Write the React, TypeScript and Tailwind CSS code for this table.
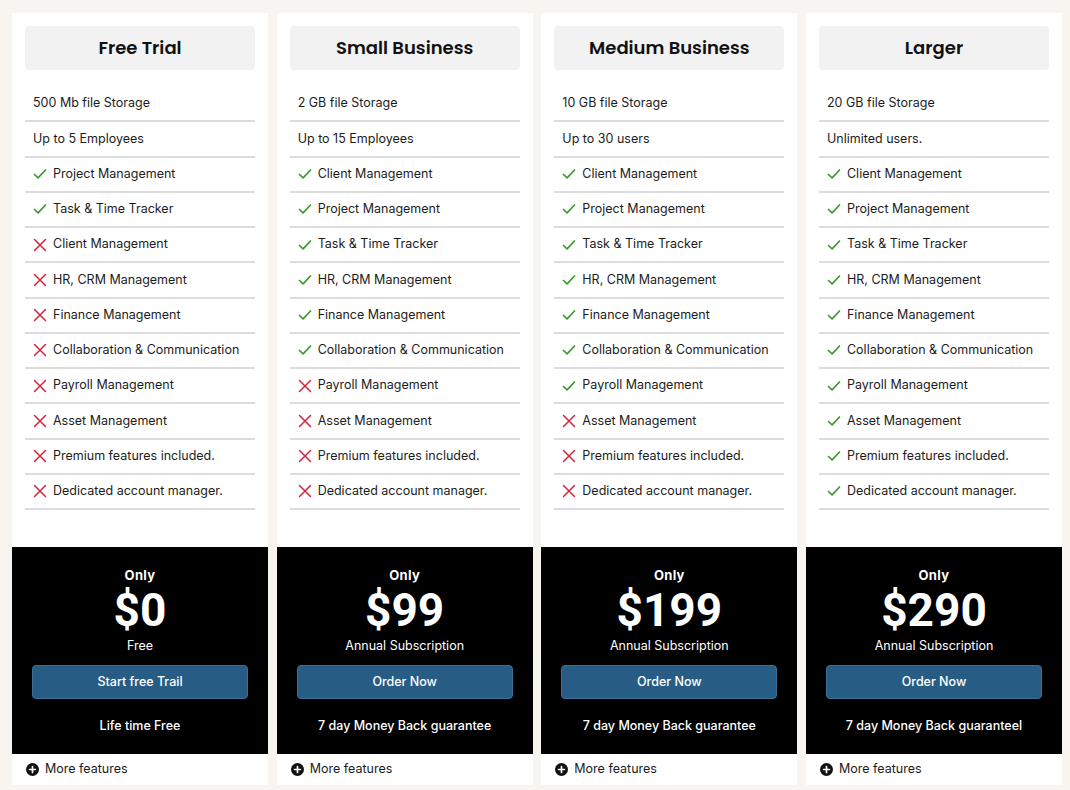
import type { ReactNode } from 'react'

type Feature = { label: string; state?: 'yes' | 'no' }

interface Plan {
  name: string
  features: Feature[]
  price: string
  period: string
  cta: string
  note: string
}

const y = (label: string): Feature => ({ label, state: 'yes' })
const n = (label: string): Feature => ({ label, state: 'no' })

const plans: Plan[] = [
  {
    name: 'Free Trial',
    features: [
      { label: '500 Mb file Storage' },
      { label: 'Up to 5 Employees' },
      y('Project Management'),
      y('Task & Time Tracker'),
      n('Client Management'),
      n('HR, CRM Management'),
      n('Finance Management'),
      n('Collaboration & Communication'),
      n('Payroll Management'),
      n('Asset Management'),
      n('Premium features included.'),
      n('Dedicated account manager.'),
    ],
    price: '$0',
    period: 'Free',
    cta: 'Start free Trail',
    note: 'Life time Free',
  },
  {
    name: 'Small Business',
    features: [
      { label: '2 GB file Storage' },
      { label: 'Up to 15 Employees' },
      y('Client Management'),
      y('Project Management'),
      y('Task & Time Tracker'),
      y('HR, CRM Management'),
      y('Finance Management'),
      y('Collaboration & Communication'),
      n('Payroll Management'),
      n('Asset Management'),
      n('Premium features included.'),
      n('Dedicated account manager.'),
    ],
    price: '$99',
    period: 'Annual Subscription',
    cta: 'Order Now',
    note: '7 day Money Back guarantee',
  },
  {
    name: 'Medium Business',
    features: [
      { label: '10 GB file Storage' },
      { label: 'Up to 30 users' },
      y('Client Management'),
      y('Project Management'),
      y('Task & Time Tracker'),
      y('HR, CRM Management'),
      y('Finance Management'),
      y('Collaboration & Communication'),
      y('Payroll Management'),
      n('Asset Management'),
      n('Premium features included.'),
      n('Dedicated account manager.'),
    ],
    price: '$199',
    period: 'Annual Subscription',
    cta: 'Order Now',
    note: '7 day Money Back guarantee',
  },
  {
    name: 'Larger',
    features: [
      { label: '20 GB file Storage' },
      { label: 'Unlimited users.' },
      y('Client Management'),
      y('Project Management'),
      y('Task & Time Tracker'),
      y('HR, CRM Management'),
      y('Finance Management'),
      y('Collaboration & Communication'),
      y('Payroll Management'),
      y('Asset Management'),
      y('Premium features included.'),
      y('Dedicated account manager.'),
    ],
    price: '$290',
    period: 'Annual Subscription',
    cta: 'Order Now',
    note: '7 day Money Back guaranteel',
  },
]

function Check() {
  return (
    <svg viewBox="0 0 14 14" className="h-[14px] w-[14px] shrink-0" fill="none" stroke="#3c9a2e" strokeWidth="1.7" strokeLinecap="round" strokeLinejoin="round">
      <path d="M1.5 7.5l3.6 3.4L12.5 3" />
    </svg>
  )
}

function Cross() {
  return (
    <svg viewBox="0 0 14 14" className="h-[14px] w-[14px] shrink-0" fill="none" stroke="#d3243c" strokeWidth="1.5" strokeLinecap="round">
      <path d="M1.5 1.5l11 11M12.5 1.5l-11 11" />
    </svg>
  )
}

function PlusCircle() {
  return (
    <svg viewBox="0 0 14 14" className="h-[13px] w-[13px] shrink-0">
      <circle cx="7" cy="7" r="7" fill="#111" />
      <path d="M7 3.8v6.4M3.8 7h6.4" stroke="#fff" strokeWidth="1.8" strokeLinecap="round" />
    </svg>
  )
}

function Row({ feature }: { feature: Feature }) {
  let icon: ReactNode = null
  if (feature.state === 'yes') icon = <Check />
  if (feature.state === 'no') icon = <Cross />
  return (
    <li className="flex h-[35.25px] items-center gap-[6px] border-b-2 border-[#dcdcdc] px-[8px] text-[12.5px] text-[#1c1c1c]">
      {icon}
      <span>{feature.label}</span>
    </li>
  )
}

function PlanCard({ plan }: { plan: Plan }) {
  return (
    <div className="flex flex-col bg-white">
      <div className="px-[13px] pt-[13px]">
        <div className="flex h-[44px] items-center justify-center rounded-[4px] bg-[#f2f2f2]">
          <h3 className="font-['Poppins','Inter',sans-serif] text-[18px] leading-[24px] font-semibold text-[#111]">{plan.name}</h3>
        </div>
        <ul className="mt-[17px]">
          {plan.features.map((f) => (
            <Row key={f.label} feature={f} />
          ))}
        </ul>
      </div>

      <div className="mt-[37px] flex h-[207px] flex-col items-center bg-black px-[20px] pt-[20px] text-white">
        <div className="text-[13px] leading-[16px] font-bold tracking-wide">Only</div>
        <div className="font-['Roboto',sans-serif] text-[46px] leading-[55px] font-bold">{plan.price}</div>
        <div className="text-[12.5px] leading-[16px]">{plan.period}</div>
        <button
          type="button"
          className="mt-[11px] h-[34px] w-full rounded-[4px] border border-[#3b7199] bg-[#275d84] text-[12.5px] font-medium text-white"
        >
          {plan.cta}
        </button>
        <div className="mt-[18px] text-[12.5px] font-medium">{plan.note}</div>
      </div>

      <div className="flex h-[31px] items-center gap-[6px] px-[14px] text-[12.5px] text-[#1c1c1c]">
        <PlusCircle />
        <span>More features</span>
      </div>
    </div>
  )
}

export default function App() {
  return (
    <div className="min-h-[790px] bg-[#f8f4f0] pt-[13px] pr-[8px] pb-[5px] pl-[12px] font-['Inter',sans-serif]">
      <div className="grid grid-cols-4 gap-[8.67px]">
        {plans.map((p) => (
          <PlanCard key={p.name} plan={p} />
        ))}
      </div>
    </div>
  )
}
